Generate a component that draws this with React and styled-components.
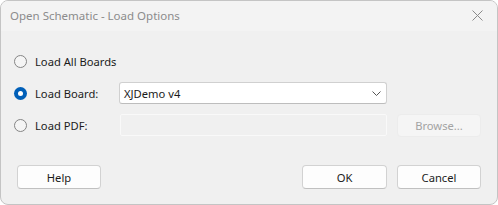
import styled, { createGlobalStyle } from "styled-components";

const GlobalStyle = createGlobalStyle`
  html, body {
    margin: 0;
    padding: 0;
    background: #ffffff;
  }
  * {
    box-sizing: border-box;
  }
`;

const Window = styled.div`
  width: 498px;
  height: 205px;
  border: 1px solid #c4c4c4;
  border-radius: 8px;
  background: #f0f0f0;
  display: flex;
  flex-direction: column;
  overflow: hidden;
  font-family: "Segoe UI", "Noto Sans", sans-serif;
  font-size: 11.2px;
  color: #1b1b1b;
`;

const TitleBar = styled.div`
  height: 30px;
  background: #f3f3f3;
  display: flex;
  align-items: center;
  justify-content: space-between;
  padding: 0 10px 0 9px;
`;

const Title = styled.span`
  color: #8b8b8b;
  font-size: 11.5px;
  margin-top: -2px;
`;

const CloseButton = styled.svg`
  width: 11px;
  height: 11px;
  margin-right: 4px;
  margin-top: -1px;
`;

const Body = styled.div`
  flex: 1;
  display: flex;
  flex-direction: column;
  padding: 19px 16px 15px 13px;
`;

const Options = styled.div`
  display: grid;
  grid-template-columns: 95px 268px 84px;
  grid-auto-rows: 22px;
  column-gap: 10px;
  row-gap: 10px;
  align-items: center;
`;

const RadioLabel = styled.label`
  display: flex;
  align-items: center;
  gap: 8px;
  white-space: nowrap;
  grid-column: ${(p) => (p.$wide ? "1 / -1" : "auto")};
`;

const Radio = styled.span`
  width: 13px;
  height: 13px;
  border-radius: 50%;
  flex-shrink: 0;
  display: flex;
  align-items: center;
  justify-content: center;
  border: ${(p) => (p.$checked ? "none" : "1px solid #858585")};
  background: ${(p) => (p.$checked ? "#005fb8" : "#f5f5f5")};

  &::after {
    content: "";
    display: ${(p) => (p.$checked ? "block" : "none")};
    width: 5px;
    height: 5px;
    border-radius: 50%;
    background: #ffffff;
  }
`;

const Combo = styled.div`
  height: 22px;
  background: #ffffff;
  border: 1px solid #d0d0d0;
  border-bottom-color: #bdbdbd;
  border-radius: 3px;
  display: flex;
  align-items: center;
  justify-content: space-between;
  padding: 0 5px 0 4px;
`;

const Field = styled.div`
  height: 22px;
  margin-left: 1px;
  background: #f0f0f0;
  border: 1px solid #f9f9f9;
  border-radius: 2px;
`;

const Button = styled.button`
  width: ${(p) => p.$width || "84px"};
  height: ${(p) => p.$height || "24px"};
  font-family: inherit;
  font-size: 11.2px;
  color: ${(p) => (p.disabled ? "#a3a3a3" : "#1b1b1b")};
  background: ${(p) => (p.disabled ? "#f5f5f5" : "#fdfdfd")};
  border: 1px solid ${(p) => (p.disabled ? "#ececec" : "#d2d2d2")};
  border-bottom-color: ${(p) => (p.disabled ? "#ececec" : "#c0c0c0")};
  border-radius: 4px;
  padding: 0;
  display: flex;
  align-items: center;
  justify-content: center;
`;

const Footer = styled.div`
  margin-top: auto;
  display: flex;
  align-items: center;
  gap: 10px;
  padding-left: 3px;
`;

const Spacer = styled.div`
  flex: 1;
`;

export default function App() {
  return (
    <>
      <GlobalStyle />
      <Window>
        <TitleBar>
          <Title>Open Schematic - Load Options</Title>
          <CloseButton viewBox="0 0 11 11">
            <path d="M0.5 0.5 L10.5 10.5 M10.5 0.5 L0.5 10.5" stroke="#8a8a8a" strokeWidth="1" fill="none" />
          </CloseButton>
        </TitleBar>
        <Body>
          <Options>
            <RadioLabel $wide>
              <Radio />
              Load All Boards
            </RadioLabel>
            <RadioLabel>
              <Radio $checked />
              Load Board:
            </RadioLabel>
            <Combo>
              <span>XJDemo v4</span>
              <svg width="9" height="5" viewBox="0 0 9 5">
                <polyline points="0.5,0.5 4.5,4.5 8.5,0.5" stroke="#555" strokeWidth="1" fill="none" />
              </svg>
            </Combo>
            <span />
            <RadioLabel>
              <Radio />
              Load PDF:
            </RadioLabel>
            <Field />
            <Button disabled $height="23px">Browse...</Button>
          </Options>
          <Footer>
            <Button>Help</Button>
            <Spacer />
            <Button $width="85px">OK</Button>
            <Button>Cancel</Button>
          </Footer>
        </Body>
      </Window>
    </>
  );
}
